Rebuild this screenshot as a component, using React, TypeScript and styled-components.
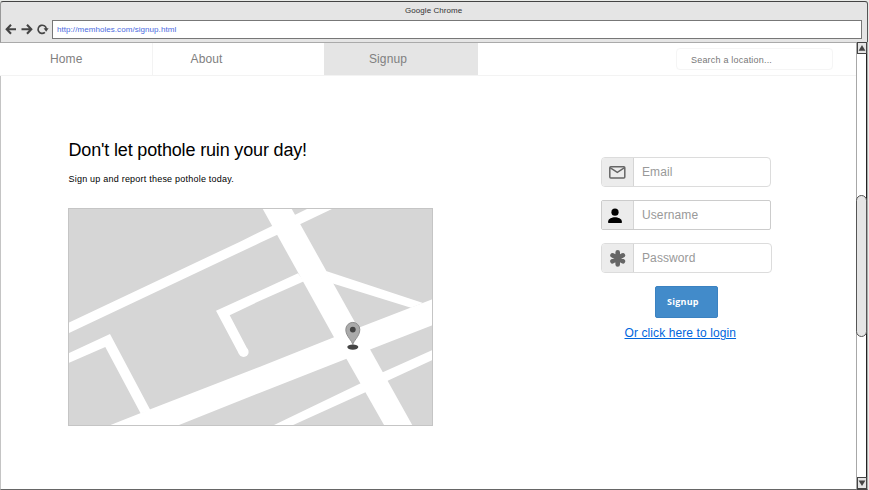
import React from "react";
import styled, { createGlobalStyle } from "styled-components";

const GlobalStyle = createGlobalStyle`
  * { box-sizing: border-box; }
  body { margin: 0; background: #fff; font-family: "Liberation Sans", Arial, sans-serif; overflow: hidden; }
`;

const BrowserWindow = styled.div`
  width: 869px;
  height: 490px;
  display: flex;
  flex-direction: column;
  background: #e9ebe8;
  padding: 1px 1px 0 0;
`;

const Chrome = styled.header`
  height: 42px;
  flex: none;
  background: #e5e5e5;
  border: 1px solid #444;
  border-left-color: #999;
  border-right-color: #555;
  border-bottom-color: #aaa;
  border-radius: 3px 3px 0 0;
`;

const TitleBar = styled.div`
  height: 18px;
  padding-left: 404px;
  font-size: 8px;
  line-height: 17px;
  letter-spacing: 0.06px;
  color: #333;
`;

const AddressRow = styled.div`
  display: flex;
  height: 19px;
  padding: 0 5px 0 4px;
`;

const NavIcons = styled.svg`
  width: 47px;
  height: 19px;
  flex: none;
`;

const AddressField = styled.div`
  flex: 1;
  height: 19px;
  background: #fff;
  border: 1px solid #777;
  padding-left: 4px;
  font-size: 8px;
  line-height: 17px;
  letter-spacing: 0.06px;
  color: #4a6be0;
`;

const Viewport = styled.div`
  flex: 1;
  display: flex;
  min-height: 0;
`;

const Page = styled.main`
  flex: 1;
  background: #fff;
  border-left: 1px solid #c4c4c4;
  border-bottom: 1px solid #666;
`;

const NavBar = styled.nav`
  display: flex;
  height: 33px;
  margin-left: -1px;
  background: #fff;
  border-bottom: 1px solid #f3f3f3;
`;

const Tab = styled.a<{ $width: number; $inset: number; $active?: boolean; $divider?: boolean }>`
  width: ${(p) => p.$width}px;
  padding-left: ${(p) => p.$inset}px;
  font-size: 12px;
  line-height: 32px;
  letter-spacing: 0.1px;
  color: #808080;
  background: ${(p) => (p.$active ? "#e5e5e5" : "#fff")};
  border-right: ${(p) => (p.$divider ? "1px solid #f3f3f3" : "none")};
`;

const SearchField = styled.div`
  width: 157px;
  height: 22px;
  margin: 5px 23px 0 auto;
  padding-left: 14px;
  border: 1px solid #f5f5f5;
  border-radius: 4px;
  font-size: 9px;
  line-height: 22px;
  letter-spacing: 0.2px;
  color: #777;
`;

const Columns = styled.div`
  display: flex;
  align-items: flex-start;
`;

const Intro = styled.section`
  width: 366px;
  margin: 63px 0 0 67px;
`;

const Heading = styled.h1`
  margin: 0;
  padding-left: 0.5px;
  height: 23px;
  font-size: 18px;
  line-height: 22px;
  font-weight: 400;
  letter-spacing: -0.16px;
  white-space: nowrap;
  color: #000;
`;

const Lead = styled.p`
  margin: 10px 0 0;
  padding-left: 0.5px;
  height: 36px;
  font-size: 9px;
  line-height: 14px;
  letter-spacing: 0.22px;
  white-space: nowrap;
  color: #000;
`;

const MapDrawing = styled.svg`
  display: block;
  width: 365px;
  height: 218px;
`;

const Form = styled.form`
  display: flex;
  flex-direction: column;
  width: 172px;
  margin: 81px 0 0 167px;
`;

const Field = styled.div<{ $width?: number; $strong?: boolean }>`
  display: flex;
  width: ${(p) => p.$width ?? 170}px;
  height: 30px;
  margin-bottom: 13px;
  border: 1px solid ${(p) => (p.$strong ? "#ccc" : "#dcdcdc")};
  border-radius: ${(p) => (p.$strong ? 2 : 4)}px;
  overflow: hidden;
`;

const FieldIcon = styled.span`
  width: 32px;
  background: #ececec;
  border-right: 1px solid #d5d5d5;
`;

const FieldLabel = styled.span`
  padding-left: 8px;
  font-size: 12px;
  line-height: 28px;
  letter-spacing: 0.1px;
  color: #999;
`;

const Submit = styled.button`
  width: 63px;
  height: 32px;
  margin: 0 0 0 54px;
  padding: 0 0 1px 11px;
  border: 1px solid #3b82c1;
  border-radius: 2px;
  background: #428bca;
  color: #fff;
  font: 700 9px/30px "Open Sans", sans-serif;
  letter-spacing: 0.25px;
  text-align: left;
`;

const LoginLink = styled.a`
  margin: 7px 0 0 23.5px;
  font-size: 12px;
  line-height: 16px;
  letter-spacing: 0.1px;
  white-space: nowrap;
  text-decoration: underline;
  color: #0066dd;
`;

const Scrollbar = styled.aside`
  display: flex;
  flex-direction: column;
  width: 12px;
  margin-top: -1px;
  background: #fff;
  border-left: 1px solid #a8a8a8;
  border-right: 1px solid #aaa;
  border-bottom: 1px solid #444;
  box-shadow: inset -1px 0 #222;
`;

const ScrollButton = styled.div`
  width: 10px;
  height: 12px;
  flex: none;
  background: #e5e5e5;
  border: 1px solid #444;
  svg { display: block; width: 8px; height: 10px; }
`;

const Track = styled.div`
  flex: 1;
  padding-top: 141px;
`;

const Thumb = styled.div`
  width: 11px;
  height: 142px;
  margin-left: -1px;
  background: #e5e5e5;
  border: 1px solid #555;
  border-radius: 5.5px;
`;

function StreetMap() {
  return (
    <MapDrawing viewBox="68 208 365 218">
      <rect x="68" y="208" width="365" height="218" fill="#d6d6d6" />
      <g fill="#fff">
        <path d="M68 323 240 241.7 272 226 308 208.5H333L299.5 224.5 260 242.8 68 333.5Z" />
        <path d="M262.5 208.5H291.5L412.8 426H384.6L346.7 359.2 334 337.3Z" />
        <path d="M108 426 150.3 409.3 260 366.7 334 337.3 434 298.5V324.5L370.7 349.3 260 392.7 176.5 426Z" />
        <path d="M68 353.4 110 334 150.3 410 140.7 413.5 105.3 347 68 363.3Z" />
        <path d="M216 310.7 260 290.7 298 273.3 304 281.3 260 300.7 229.7 315.3 248.2 350.5 239 354Z" />
        <circle cx="243.6" cy="352" r="5" />
        <path d="M326 271 423 303 411 307.7 332 283.3Z" />
        <path d="M272 426 360.7 383.3 383.3 372 434 349.2V359.2L388.7 380.3 366 392 291 426Z" />
      </g>
      <rect x="68.5" y="208.5" width="364" height="217" fill="none" stroke="#c5c5c5" />
      <ellipse cx="352.8" cy="347.1" rx="5.5" ry="2.6" fill="#444" />
      <path
        d="M352.8 345C352.4 340.5 345.8 336.5 345.8 329.6A7 7.2 0 0 1 359.8 329.6C359.8 336.5 353.2 340.5 352.8 345Z"
        fill="#aaa"
        stroke="#8c8c8c"
      />
      <circle cx="352.8" cy="329.6" r="2.9" fill="#444" />
    </MapDrawing>
  );
}

export default function App() {
  return (
    <>
      <GlobalStyle />
      <BrowserWindow>
        <Chrome>
          <TitleBar>Google Chrome</TitleBar>
          <AddressRow>
            <NavIcons viewBox="5 20 47 19" fill="none" stroke="#444" strokeWidth="2.1">
              <path d="M16 29.2H7M11 24.7 6.7 29.2 11 33.7M21.5 29.2H31M27 24.7 31.3 29.2 27 33.7" />
              <path d="M44.9 32.4A4.1 4.1 0 1 1 46.3 29" strokeWidth="1.6" />
              <path d="M43.6 28.3H48.6L46.2 31.7Z" fill="#444" stroke="none" />
            </NavIcons>
            <AddressField>http://memholes.com/signup.html</AddressField>
          </AddressRow>
        </Chrome>
        <Viewport>
          <Page>
            <NavBar>
              <Tab $width={153} $inset={50} $divider>Home</Tab>
              <Tab $width={171} $inset={37.6}>About</Tab>
              <Tab $width={154} $inset={45} $active>Signup</Tab>
              <SearchField>Search a location...</SearchField>
            </NavBar>
            <Columns>
              <Intro>
                <Heading>Don't let pothole ruin your day!</Heading>
                <Lead>Sign up and report these pothole today.</Lead>
                <StreetMap />
              </Intro>
              <Form>
                <Field>
                  <FieldIcon>
                    <svg width="31" height="28" viewBox="0 0 31 28" fill="none" stroke="#666" strokeWidth="1.5">
                      <rect x="7.8" y="8.8" width="15" height="11.2" rx="1" />
                      <path d="M8 9.7 15.3 14.3 22.6 9.7" />
                    </svg>
                  </FieldIcon>
                  <FieldLabel>Email</FieldLabel>
                </Field>
                <Field $strong>
                  <FieldIcon>
                    <svg width="31" height="28" viewBox="0 0 31 28">
                      <circle cx="13" cy="11.2" r="3.6" />
                      <path d="M6.2 22V20.2C6.2 17.8 10 16.2 13 16.2S19.8 17.8 19.8 20.2V22Z" />
                    </svg>
                  </FieldIcon>
                  <FieldLabel>Username</FieldLabel>
                </Field>
                <Field $width={171}>
                  <FieldIcon>
                    <svg width="31" height="28" viewBox="0 0 31 28" stroke="#666" strokeWidth="4.6" strokeLinecap="round">
                      <path d="M15.7 8.2V20.4M10.5 11.3 20.9 17.3M20.9 11.3 10.5 17.3" />
                    </svg>
                  </FieldIcon>
                  <FieldLabel>Password</FieldLabel>
                </Field>
                <Submit type="button">Signup</Submit>
                <LoginLink>Or click here to login</LoginLink>
              </Form>
            </Columns>
          </Page>
          <Scrollbar>
            <ScrollButton>
              <svg viewBox="0 0 8 10"><path d="M4 2 7.4 7.7H.6Z" fill="#444" /></svg>
            </ScrollButton>
            <Track>
              <Thumb />
            </Track>
            <ScrollButton>
              <svg viewBox="0 0 8 10"><path d="M4 8 7.4 2.6H.6Z" fill="#444" /></svg>
            </ScrollButton>
          </Scrollbar>
        </Viewport>
      </BrowserWindow>
    </>
  );
}
